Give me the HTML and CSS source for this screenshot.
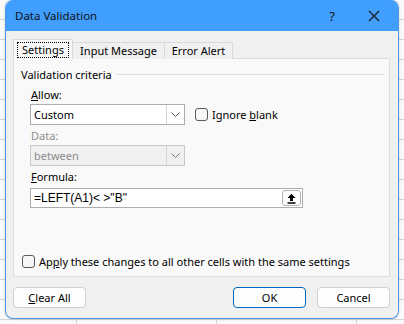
FILE: index.html
```html
<!DOCTYPE html>
<html lang="en">
<head>
    <meta charset="UTF-8">
    <title>Data Validation</title>
    <link rel="stylesheet" href="styles.css">
</head>
<body>
    <div class="dialog">
        <div class="titlebar">
            <span class="title">Data Validation</span>
            <span class="help">?</span>
            <svg class="close" width="12" height="12" viewBox="0 0 12 12">
                <path d="M1 1 L11 11 M11 1 L1 11" stroke="#1a1a1a" stroke-width="1.2" fill="none"/>
            </svg>
        </div>
        <div class="content">
            <div class="tabs">
                <div class="tab active"><span class="focus">Settings</span></div>
                <div class="tab">Input Message</div>
                <div class="tab">Error Alert</div>
            </div>
            <div class="panel">
                <div class="legend">
                    <span>Validation criteria</span>
                    <div class="rule"></div>
                </div>
                <div class="criteria">
                    <div class="label"><u>A</u>llow:</div>
                    <div class="row">
                        <div class="select">
                            <span class="value">Custom</span>
                            <span class="arrow"><svg width="9" height="5" viewBox="0 0 9 5"><path d="M0.5 0.5 L4.5 4.5 L8.5 0.5" stroke="#555" fill="none"/></svg></span>
                        </div>
                        <label class="check"><span class="box"></span><span>Ignore <u>b</u>lank</span></label>
                    </div>
                    <div class="label disabled">Data:</div>
                    <div class="select disabled">
                        <span class="value">between</span>
                        <span class="arrow"><svg width="9" height="5" viewBox="0 0 9 5"><path d="M0.5 0.5 L4.5 4.5 L8.5 0.5" stroke="#777" fill="none"/></svg></span>
                    </div>
                    <div class="label"><u>F</u>ormula:</div>
                    <div class="formula">
                        <span class="expr">=LEFT(A1)&lt; &gt;"B"</span>
                        <span class="pick">
                            <svg width="11" height="11" viewBox="0 0 11 11"><path d="M5.5 0.8 L9.5 5 L7 5 L7 8 L4 8 L4 5 L1.5 5 Z" fill="#000"/><path d="M1.5 10 L9.5 10" stroke="#000" stroke-width="1.3"/></svg>
                        </span>
                    </div>
                </div>
                <label class="check apply"><span class="box"></span><span>Ap<u>p</u>ly these changes to all other cells with the same settings</span></label>
            </div>
            <div class="buttons">
                <button class="btn"><u>C</u>lear All</button>
                <div class="spacer"></div>
                <button class="btn default">OK</button>
                <button class="btn">Cancel</button>
            </div>
        </div>
    </div>
</body>
</html>
```

FILE: styles.css
```css
html, body {
    margin: 0;
    width: 404px;
    height: 324px;
    overflow: hidden;
}
body {
    font-family: "Noto Sans", "Open Sans", sans-serif;
    font-size: 11px;
    color: #000;
    background-color: #fafafa;
    background-image:
        repeating-linear-gradient(to right, transparent 0 76px, #d4d4d4 76px 77px, transparent 77px 140px),
        repeating-linear-gradient(to bottom, transparent 0 19px, #d4d4d4 19px 20px);
}
.dialog {
    margin-left: 5px;
    width: 392px;
    height: 318px;
    border: 1px solid #4a97e8;
    border-top: none;
    border-radius: 8px;
    background: #f0f0f0;
    overflow: hidden;
    display: flex;
    flex-direction: column;
    box-shadow: 0 0 3px rgba(0, 0, 0, 0.15);
}
.titlebar {
    height: 31px;
    background: #409eff;
    display: flex;
    align-items: center;
    padding-left: 9px;
    flex-shrink: 0;
}
.title {
    flex: 1;
    font-size: 11.5px;
    color: #111;
}
.help {
    font-size: 13px;
    color: #111;
    margin-right: 33px;
}
.close {
    margin-right: 18px;
}
.content {
    padding: 8px 8px 0 7px;
    display: flex;
    flex-direction: column;
}
.tabs {
    display: flex;
    align-items: flex-end;
    height: 20px;
    position: relative;
    z-index: 1;
}
.tab {
    height: 17px;
    line-height: 16px;
    border: 1px solid #d9d9d9;
    border-bottom: none;
    background: #f0f0f0;
    color: #000;
    box-sizing: border-box;
    white-space: nowrap;
    text-align: center;
}
.tab + .tab {
    border-left: none;
}
.tab.active {
    height: 20px;
    width: 60px;
    padding: 2px 3px 0 3px;
    background: #f9f9f9;
    line-height: 14px;
}
.focus {
    display: block;
    border: 1px dotted #000;
    height: 14px;
}
.tab:nth-child(2) {
    width: 92px;
}
.tab:nth-child(3) {
    width: 68px;
}
.panel {
    height: 219px;
    margin-top: -1px;
    border: 1px solid #dcdcdc;
    background: #f9f9f9;
    padding: 7px 5px 0 7px;
    box-sizing: border-box;
    display: flex;
    flex-direction: column;
}
.legend {
    display: flex;
    align-items: center;
    height: 16px;
}
.legend .rule {
    flex: 1;
    height: 1px;
    background: #dcdcdc;
    margin-left: 5px;
}
.criteria {
    padding-left: 9px;
    margin-top: 5px;
}
.label {
    height: 16px;
    line-height: 16px;
    margin-bottom: 1px;
    padding-left: 1px;
}
.label.disabled {
    color: #8d8d8d;
}
.row {
    display: flex;
    align-items: center;
}
.select {
    width: 155px;
    height: 21px;
    border: 1px solid #adadad;
    background: #fff;
    box-sizing: border-box;
    display: flex;
    margin-bottom: 3px;
}
.select .value {
    flex: 1;
    padding-left: 3px;
    line-height: 19px;
}
.select .arrow {
    width: 17px;
    border-left: 1px solid #d4d4d4;
    display: flex;
    align-items: center;
    justify-content: center;
}
.select.disabled {
    background: #f0f0f0;
    border-color: #c8c8c8;
    color: #8d8d8d;
}
.row .select {
    margin-bottom: 0;
}
.row + .label {
    margin-top: 3px;
}
.check {
    display: flex;
    align-items: center;
    margin-left: 10px;
}
.box {
    width: 11px;
    height: 11px;
    border: 1px solid #5a5a5a;
    border-radius: 3px;
    background: #f6f6f6;
    margin-right: 4px;
}
.formula {
    margin-top: 3px;
    width: 273px;
    height: 20px;
    border: 1px solid #adadad;
    background: #fff;
    box-sizing: border-box;
    display: flex;
    align-items: center;
}
.expr {
    flex: 1;
    padding-left: 3px;
    font-family: "Liberation Sans", Arial, sans-serif;
    font-size: 12px;
}
.pick {
    width: 19px;
    height: 16px;
    border: 1px solid #b4b4b4;
    border-radius: 3px;
    background: #fdfdfd;
    margin-right: 1px;
    display: flex;
    align-items: center;
    justify-content: center;
    box-sizing: border-box;
}
.apply {
    margin-left: 1px;
    margin-top: 46px;
}
.buttons {
    display: flex;
    margin-top: 10px;
    padding-left: 0;
}
.spacer {
    flex: 1;
}
.btn {
    width: 73px;
    height: 21px;
    font-family: inherit;
    font-size: 11px;
    background: #fdfdfd;
    border: 1px solid #d0d0d0;
    border-radius: 4px;
    padding: 0;
    color: #000;
}
.btn + .btn {
    margin-left: 11px;
}
.btn.default {
    border-color: #0067c0;
}
```
